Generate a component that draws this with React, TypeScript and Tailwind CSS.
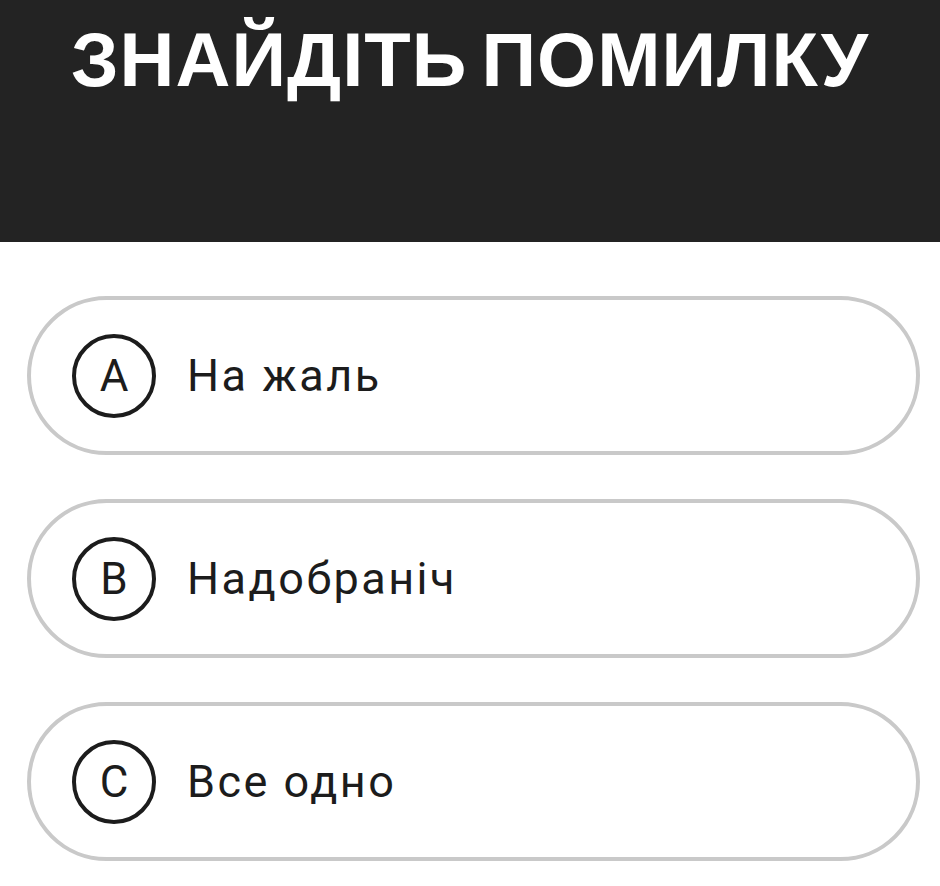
const options = [
  { letter: "A", text: "На жаль" },
  { letter: "B", text: "Надобраніч" },
  { letter: "C", text: "Все одно" },
];

function Option({ letter, text }: { letter: string; text: string }) {
  return (
    <div className="flex h-[159px] items-center rounded-full border-4 border-[#c9c9c9] bg-white pl-[41px]">
      <div className="flex h-[84px] w-[84px] shrink-0 items-center justify-center rounded-full border-[4px] border-[#1c1c1c] text-[44px] leading-none text-[#1c1c1c]">
        {letter}
      </div>
      <span className="ml-[31px] text-[45px] leading-none tracking-[2.5px] text-[#1c1c1c]">{text}</span>
    </div>
  );
}

export default function App() {
  return (
    <div
      className="min-h-[886px] w-[940px] bg-white"
      style={{ fontFamily: "Roboto, 'Noto Sans', sans-serif" }}
    >
      <header className="h-[242px] bg-[#232323] pt-[22px] text-center">
        <h1
          className="text-[76px] font-bold leading-none tracking-[1px] text-white [word-spacing:-8px]"
          style={{ fontFamily: "'Liberation Sans', Arial, sans-serif" }}
        >
          ЗНАЙДІТЬ ПОМИЛКУ
        </h1>
      </header>
      <main className="flex flex-col gap-[44px] pl-[27px] pr-[20px] pt-[54px]">
        {options.map((o) => (
          <Option key={o.letter} letter={o.letter} text={o.text} />
        ))}
      </main>
    </div>
  );
}
